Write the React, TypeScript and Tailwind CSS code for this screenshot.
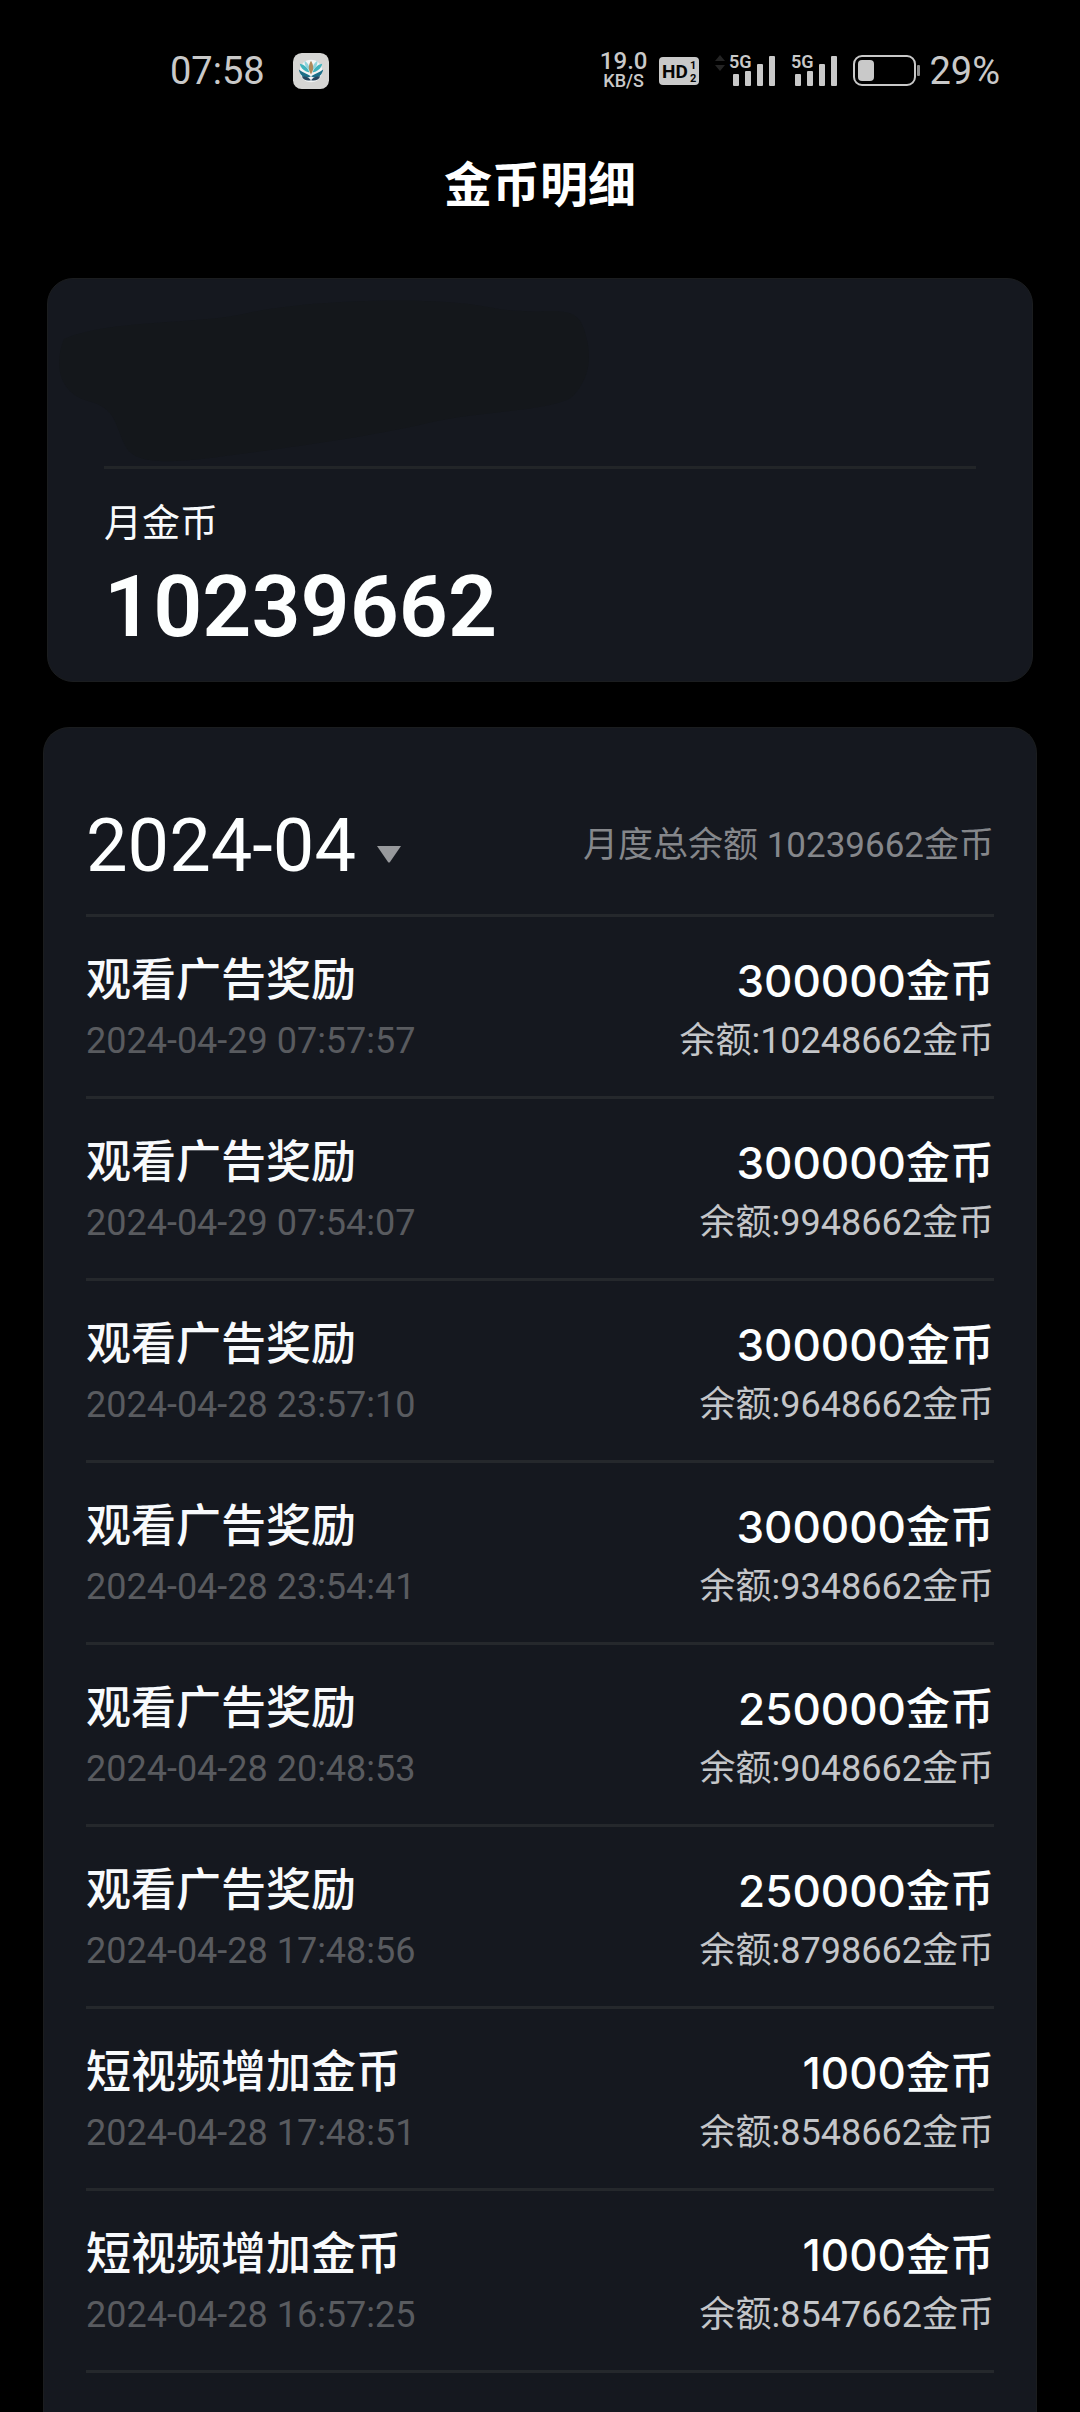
interface CoinRecord {
  title: string;
  time: string;
  amount: string;
  balance: string;
}

const records: CoinRecord[] = [
  { title: "观看广告奖励", time: "2024-04-29 07:57:57", amount: "300000", balance: "10248662" },
  { title: "观看广告奖励", time: "2024-04-29 07:54:07", amount: "300000", balance: "9948662" },
  { title: "观看广告奖励", time: "2024-04-28 23:57:10", amount: "300000", balance: "9648662" },
  { title: "观看广告奖励", time: "2024-04-28 23:54:41", amount: "300000", balance: "9348662" },
  { title: "观看广告奖励", time: "2024-04-28 20:48:53", amount: "250000", balance: "9048662" },
  { title: "观看广告奖励", time: "2024-04-28 17:48:56", amount: "250000", balance: "8798662" },
  { title: "短视频增加金币", time: "2024-04-28 17:48:51", amount: "1000", balance: "8548662" },
  { title: "短视频增加金币", time: "2024-04-28 16:57:25", amount: "1000", balance: "8547662" },
];

const AppBadge = () => (
  <svg viewBox="0 0 37 37" className="ml-7 size-9" aria-hidden="true">
    <rect width="37" height="37" rx="9" fill="#d6d6d4" />
    <circle cx="18.500" cy="18.500" r="11.500" fill="#f3f5f5" />
    <path d="M7 11c5 1 8 4 10 9-5-1-9-4-10-9Z" fill="#3fb3bd" />
    <path d="M30 11c-5 1-8 4-10 9 5-1 9-4 10-9Z" fill="#3fb3bd" />
    <path d="M12 8c3 2 5 5 5.500 10-4-2-6-6-5.500-10Z" fill="#8fd3dc" />
    <path d="M25 8c-3 2-5 5-5.500 10 4-2 6-6 5.500-10Z" fill="#8fd3dc" />
    <path d="M6 17c4 3 8 4 12.500 7-5 3-11 1-12.500-7Z" fill="#1d6f88" />
    <path d="M31 17c-4 3-8 4-12.500 7 5 3 11 1 12.500-7Z" fill="#1d6f88" />
    <path d="M9 24c4 0 7 1 9.500 4-4 1-8 0-9.500-4Z" fill="#27455f" />
    <path d="M28 24c-4 0-7 1-9.500 4 4 1 8 0 9.500-4Z" fill="#27455f" />
    <path d="M18.500 8c3 5 3 9 0 14-3-5-3-9 0-14Z" fill="#b08a5c" />
  </svg>
);

const HdBadge = () => (
  <svg viewBox="0 0 40 28" className="h-7 w-10" aria-hidden="true">
    <rect width="40" height="28" rx="4" fill="#c9c9c9" />
    <g fill="#050505" fontFamily="Roboto, sans-serif" fontWeight="700">
      <text x="3" y="21" fontSize="19">
        HD
      </text>
      <text x="31" y="12" fontSize="11">
        1
      </text>
      <text x="31" y="25" fontSize="11">
        2
      </text>
    </g>
  </svg>
);

const Signal = () => (
  <svg viewBox="0 -4 46 42" className="h-[42px] w-[46px]" fill="#c9c9c9" aria-hidden="true">
    <text x="0" y="14" fontSize="18" fontFamily="Roboto, sans-serif" fontWeight="600">
      5G
    </text>
    <rect x="4" y="20" width="6" height="12" rx="1" />
    <rect x="16" y="17" width="6" height="15" rx="1" />
    <rect x="28" y="10" width="6" height="22" rx="1" />
    <rect x="40" y="2" width="6" height="30" rx="1" />
  </svg>
);

const Battery = () => (
  <svg viewBox="0 0 68 32" className="h-8 w-[68px]" aria-hidden="true">
    <rect x="1" y="1" width="61" height="29" rx="8" fill="none" stroke="#c9c9c9" strokeWidth="2" />
    <rect x="5" y="5" width="16" height="21" rx="4" fill="#c9c9c9" />
    <rect x="64" y="10" width="3" height="11" rx="1" fill="#8d8d8d" />
  </svg>
);

const StatusBar = () => (
  <div className="flex h-[142px] items-center justify-between pl-[170px] pr-20 text-[#c9c9c9]">
    <div className="flex items-center">
      <span className="text-[38px]">07:58</span>
      <AppBadge />
    </div>
    <div className="flex items-center">
      <div className="mr-3 flex flex-col items-center font-medium">
        <span className="text-2xl leading-5">19.0</span>
        <span className="text-lg leading-5">KB/S</span>
      </div>
      <HdBadge />
      {/* 上下行箭头 */}
      <svg viewBox="0 0 10 16" className="mb-4 ml-4 mr-1 h-4 w-[10px]" fill="#242424" aria-hidden="true">
        <path d="M5 0l5 6H0ZM5 16l5-6H0Z" />
      </svg>
      <Signal />
      <div className="ml-4 mr-4 flex">
        <Signal />
      </div>
      <Battery />
      <span className="ml-2 text-[38px]">29%</span>
    </div>
  </div>
);

const SummaryCard = () => (
  <section className="relative mx-[47px] rounded-[26px] border border-[#1b1d1f] bg-[#15181f] px-14 pb-[26px]">
    {/* 涂抹区域 */}
    <svg viewBox="0 0 560 186" className="absolute left-0 top-0 h-[186px] w-[560px]" aria-hidden="true">
      <path
        d="M16 60C60 40 150 46 200 34S380 16 440 28 526 20 536 50 540 100 526 116 430 132 380 144 260 166 200 174 90 190 78 168 70 130 40 122 6 84 16 60Z"
        fill="#14171b"
      />
    </svg>
    <div className="h-[187px]" />
    <div className="h-[3px] bg-[#222528]" />
    <p className="mt-[30px] text-[38px] leading-[48px] text-[#f8fafc]">月金币</p>
    <p className="mt-3 text-[86px] font-semibold leading-[96px] text-[#fdffff]">10239662</p>
  </section>
);

const RecordItem = ({ title, time, amount, balance }: CoinRecord) => (
  <li className="flex justify-between border-b-[3px] border-[#25282c] pb-[27px] pt-8">
    <div>
      <p className="text-[45px] font-medium leading-[64px] text-[#f8fafc]">{title}</p>
      <p className="text-4xl leading-[56px] text-[#595b5f]">{time}</p>
    </div>
    <div className="text-right">
      <p className="font-['Inter','Noto_Sans_CJK_SC',sans-serif] text-[44px] font-medium leading-[64px] text-[#fdffff]">
        {amount}金币
      </p>
      <p className="text-4xl leading-[56px] text-[#c4c6c9]">余额:{balance}金币</p>
    </div>
  </li>
);

const App = () => {
  return (
    <main className="flex min-h-screen flex-col bg-black font-['Roboto','Noto_Sans_CJK_SC',sans-serif]">
      <StatusBar />
      <h1 className="mb-14 pt-2 text-center text-5xl font-bold leading-[72px] text-white">金币明细</h1>
      <SummaryCard />

      <section className="mx-[43px] mt-[45px] flex-1 rounded-t-[26px] border border-b-0 border-[#1b1d1f] bg-[#15181f] px-[42px]">
        <div className="flex items-center justify-between border-b-[3px] border-[#25282c] pb-8 pt-[82px]">
          <div className="flex items-center">
            <select
              aria-label="选择月份"
              className="appearance-none bg-transparent text-[74px] leading-[72px] text-[#fdffff]"
            >
              <option>2024-04</option>
            </select>
            <svg viewBox="0 0 26 17" className="ml-5 mt-4 h-[17px] w-[26px]" fill="#97999c" aria-hidden="true">
              <path d="M1 0h24L14 16q-1 1-2 0Z" />
            </svg>
          </div>
          <p className="text-[35px] text-[#85878b]">月度总余额 10239662金币</p>
        </div>
        <ul>
          {records.map((record) => (
            <RecordItem key={record.time} {...record} />
          ))}
        </ul>
      </section>
    </main>
  );
};

export default App;
